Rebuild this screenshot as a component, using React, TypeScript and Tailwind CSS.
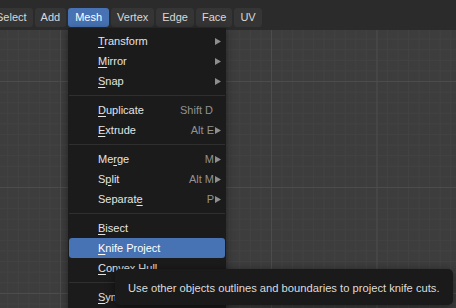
import React from "react";

type Item =
  | { sep: true }
  | {
      sep?: false;
      label: string;
      key: number; // index of the underlined letter
      shortcut?: string;
      arrow?: boolean;
      active?: boolean;
    };

const items: Item[] = [
  { label: "Transform", key: 0, arrow: true },
  { label: "Mirror", key: 0, arrow: true },
  { label: "Snap", key: 0, arrow: true },
  { sep: true },
  { label: "Duplicate", key: 0, shortcut: "Shift D" },
  { label: "Extrude", key: 0, shortcut: "Alt E", arrow: true },
  { sep: true },
  { label: "Merge", key: 2, shortcut: "M", arrow: true },
  { label: "Split", key: 1, shortcut: "Alt M", arrow: true },
  { label: "Separate", key: 7, shortcut: "P", arrow: true },
  { sep: true },
  { label: "Bisect", key: 0 },
  { label: "Knife Project", key: 0, active: true },
  { label: "Convex Hull", key: 0 },
  { sep: true },
  { label: "Symmetrize", key: 0 },
];

const headerMenus = ["Select", "Add", "Mesh", "Vertex", "Edge", "Face", "UV"];

function Arrow() {
  return (
    <svg width="6" height="7" viewBox="0 0 6 7" className="shrink-0">
      <polygon points="0,0 6,3.5 0,7" fill="#8e8e8e" />
    </svg>
  );
}

function Label({ text, k }: { text: string; k: number }) {
  return (
    <span>
      {text.slice(0, k)}
      <span className="underline decoration-1 underline-offset-[2px]">{text[k]}</span>
      {text.slice(k + 1)}
    </span>
  );
}

export default function App() {
  return (
    <div className="relative flex h-[308px] w-[456px] flex-col overflow-hidden bg-[#3d3d3d] font-['Liberation_Sans',Arial,sans-serif] text-[11px]">
      {/* header */}
      <div className="flex h-[30px] shrink-0 items-start gap-[2px] bg-[#2b2b2b] pt-2">
        {headerMenus.map((m, i) => (
          <div
            key={m}
            className={
              m === "Mesh"
                ? "flex h-[19px] items-center rounded-[3px] bg-[#4772b3] px-[7px] text-white"
                : i === 0
                  ? "-ml-[10px] flex h-[19px] items-center rounded-[3px] bg-[#353535] px-[6px] text-[#d9d9d9]"
                  : "flex h-[19px] items-center rounded-[3px] bg-[#353535] px-[6px] text-[#d9d9d9]"
            }
          >
            {m}
          </div>
        ))}
      </div>

      {/* viewport grid */}
      <div className="flex-1 [background-image:linear-gradient(to_right,#4c4c4c_1px,transparent_1px),linear-gradient(to_bottom,#4c4c4c_1px,transparent_1px),linear-gradient(to_right,#424242_1px,transparent_1px),linear-gradient(to_bottom,#424242_1px,transparent_1px)] [background-position:60px_51px] [background-size:105.5px_106px,105.5px_106px,10.55px_10.6px,10.55px_10.6px]" />

      {/* Mesh dropdown */}
      <div className="absolute left-[68px] top-[28px] w-[158px] rounded-b-[4px] bg-[#1b1b1b] px-px pt-[3px] pb-2 shadow-[0_2px_8px_rgba(0,0,0,0.45)]">
        {items.map((it, i) =>
          it.sep ? (
            <div key={i} className="flex h-[9px] items-center">
              <div className="h-px w-full bg-[#2f2f2f]" />
            </div>
          ) : (
            <div
              key={i}
              className={
                it.active
                  ? "flex h-[20px] items-center rounded-[3px] bg-[#4772b3] pl-[29px] pr-[4px] text-white"
                  : "flex h-[20px] items-center pl-[29px] pr-[4px] text-[#e4e4e4]"
              }
            >
              <Label text={it.label} k={it.key} />
              <div className="ml-auto flex items-center gap-px">
                {it.shortcut && <span className="text-[#929292]">{it.shortcut}</span>}
                {it.arrow ? <Arrow /> : <span className="w-[7px]" />}
              </div>
            </div>
          )
        )}
      </div>

      {/* tooltip */}
      <div className="absolute left-[115px] top-[269px] flex h-[36px] w-[338px] items-center rounded-[5px] bg-[#1a1a1a] pl-[13px] pt-[3px] text-[11.2px] text-[#dcdcdc] shadow-[0_2px_10px_rgba(0,0,0,0.5)]">
        Use other objects outlines and boundaries to project knife cuts.
      </div>
    </div>
  );
}
